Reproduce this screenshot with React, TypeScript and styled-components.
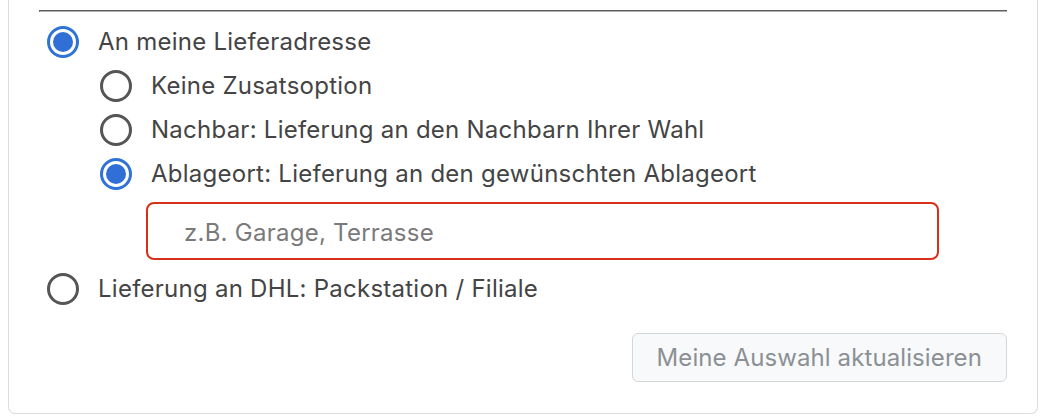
import React, { useState } from 'react';
import styled, { createGlobalStyle } from 'styled-components';

const GlobalStyle = createGlobalStyle`
  html, body {
    margin: 0;
    padding: 0;
    background: #ffffff;
  }
  body {
    font-family: Inter, "Liberation Sans", Arial, sans-serif;
    color: #444444;
    -webkit-font-smoothing: antialiased;
  }
`;

const Page = styled.div`
  padding: 0 14px 4px 8px;
`;

const Card = styled.section`
  border: 1px solid #dcdcdc;
  border-top: none;
  border-radius: 0 0 7px 7px;
  padding: 10px 30px 31px 30px;
`;

const Rule = styled.hr`
  margin: 0;
  height: 0;
  border: 1px inset #b0b0b0;
  border-right: none;
`;

const Options = styled.div`
  display: flex;
  flex-direction: column;
  padding: 8px 0 0 8px;
`;

const SubOptions = styled.div`
  display: flex;
  flex-direction: column;
  padding-left: 53px;
`;

const Row = styled.label`
  display: flex;
  align-items: center;
  gap: 19px;
  height: 44px;
  font-size: 24px;
  line-height: 1;
  letter-spacing: 0.25px;
  color: #444444;
  cursor: pointer;
`;

const Radio = styled.span<{ checked: boolean }>`
  position: relative;
  flex: none;
  box-sizing: border-box;
  width: 32px;
  height: 32px;
  border-radius: 50%;
  border: 3px solid ${(p) => (p.checked ? '#2f72d8' : '#555555')};

  &::after {
    content: '';
    position: absolute;
    inset: 3px;
    border-radius: 50%;
    background: ${(p) => (p.checked ? '#2f6fd6' : 'transparent')};
  }
`;

const TextInput = styled.input`
  box-sizing: border-box;
  width: 793px;
  height: 58px;
  margin: 6px 0 7px 99px;
  padding: 2px 36px 0;
  border: 2px solid #d6301a;
  border-radius: 8px;
  font-family: inherit;
  font-size: 24px;
  letter-spacing: 0.25px;
  color: #444444;
  outline: none;

  &::placeholder {
    color: #7a7a7a;
  }
`;

const Footer = styled.div`
  display: flex;
  justify-content: flex-end;
  margin-top: 22px;
`;

const UpdateButton = styled.button`
  box-sizing: border-box;
  height: 49px;
  padding: 0 24px;
  background: #f8f9fa;
  border: 1px solid #d4d7da;
  border-radius: 6px;
  font-family: inherit;
  font-size: 24px;
  letter-spacing: 0.1px;
  color: #8b9095;
  cursor: default;
`;

type RadioRowProps = {
  label: string;
  checked: boolean;
  onSelect: () => void;
};

const RadioRow: React.FC<RadioRowProps> = ({ label, checked, onSelect }) => (
  <Row onClick={onSelect}>
    <Radio checked={checked} />
    <span>{label}</span>
  </Row>
);

const subOptions = [
  'Keine Zusatsoption',
  'Nachbar: Lieferung an den Nachbarn Ihrer Wahl',
  'Ablageort: Lieferung an den gewünschten Ablageort',
];

export default function App() {
  const [target, setTarget] = useState<'home' | 'dhl'>('home');
  const [extra, setExtra] = useState(2);

  return (
    <>
      <GlobalStyle />
      <Page>
        <Card>
          <Rule />
          <Options>
            <RadioRow
              label="An meine Lieferadresse"
              checked={target === 'home'}
              onSelect={() => setTarget('home')}
            />
            <SubOptions>
              {subOptions.map((label, i) => (
                <RadioRow
                  key={label}
                  label={label}
                  checked={extra === i}
                  onSelect={() => setExtra(i)}
                />
              ))}
            </SubOptions>
            <TextInput placeholder="z.B. Garage, Terrasse" />
            <RadioRow
              label="Lieferung an DHL: Packstation / Filiale"
              checked={target === 'dhl'}
              onSelect={() => setTarget('dhl')}
            />
          </Options>
          <Footer>
            <UpdateButton disabled>Meine Auswahl aktualisieren</UpdateButton>
          </Footer>
        </Card>
      </Page>
    </>
  );
}
